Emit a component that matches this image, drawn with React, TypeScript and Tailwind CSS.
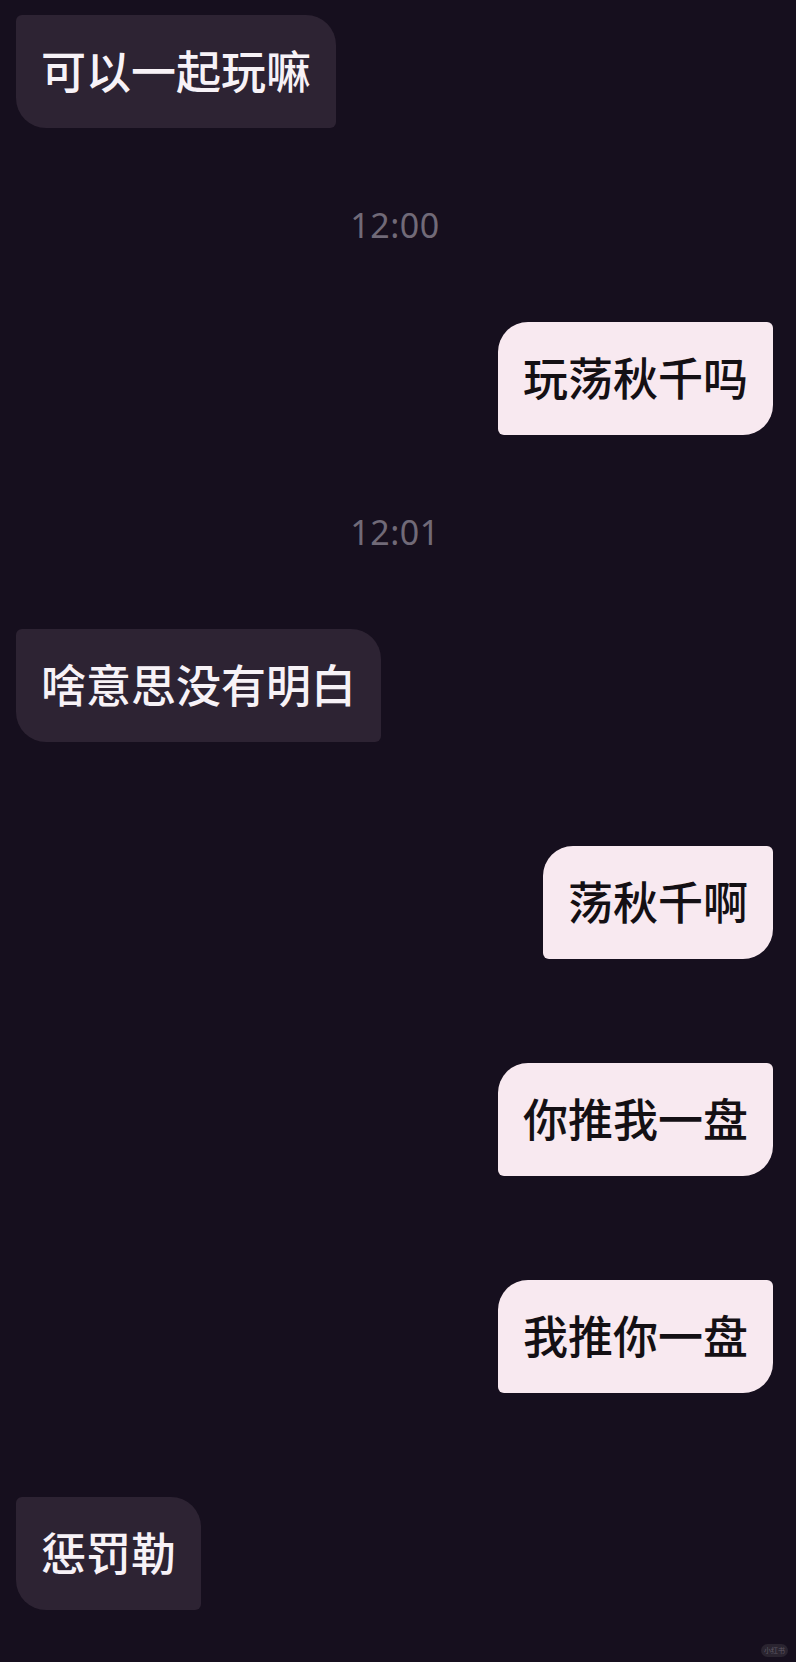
type Msg = { side: "left" | "right"; text: string; time?: string };

const messages: Msg[] = [
  { side: "left", text: "可以一起玩嘛" },
  { side: "right", text: "玩荡秋千吗", time: "12:00" },
  { side: "left", text: "啥意思没有明白", time: "12:01" },
  { side: "right", text: "荡秋千啊" },
  { side: "right", text: "你推我一盘" },
  { side: "right", text: "我推你一盘" },
  { side: "left", text: "惩罚勒" },
];

function Bubble({ side, text }: { side: "left" | "right"; text: string }) {
  if (side === "left") {
    return (
      <div className="flex justify-start pl-4">
        <div className="bg-[#2d2333] text-[#f7f2f7] px-[25px] h-[113px] flex items-center text-[45px] font-medium leading-none rounded-tl-[6px] rounded-tr-[30px] rounded-bl-[30px] rounded-br-[6px]">
          {text}
        </div>
      </div>
    );
  }
  return (
    <div className="flex justify-end pr-[23px]">
      <div className="bg-[#f8e9f0] text-[#141014] px-[25px] h-[113px] flex items-center text-[45px] font-medium leading-none rounded-tl-[30px] rounded-tr-[6px] rounded-bl-[6px] rounded-br-[30px]">
        {text}
      </div>
    </div>
  );
}

export default function App() {
  return (
    <div
      className="relative min-h-screen w-full bg-[#160f1e] pt-[15px] pb-[52px]"
      style={{ fontFamily: '"Noto Sans", "Noto Sans CJK SC", sans-serif' }}
    >
      {messages.map((m, i) => (
        <div key={i}>
          {i > 0 &&
            (m.time ? (
              <div className="h-[194px] flex items-center justify-center pr-[6px]">
                <span className="text-[34px] leading-none text-[#716a78] tracking-[0.5px]">{m.time}</span>
              </div>
            ) : (
              <div className="h-[104px]" />
            ))}
          <Bubble side={m.side} text={m.text} />
        </div>
      ))}

      {/* watermark */}
      <div className="absolute right-[8px] bottom-[5px] h-[13px] px-[3px] rounded-full bg-[#2a2430] flex items-center">
        <span className="text-[7px] leading-none text-[#5e5864]">小红书</span>
      </div>
    </div>
  );
}
